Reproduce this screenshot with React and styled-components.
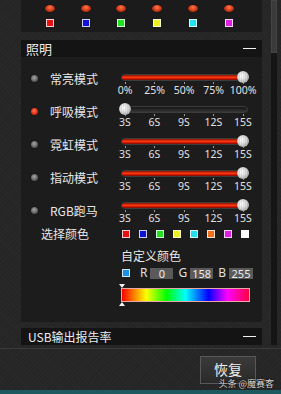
import React from 'react';
import styled, { createGlobalStyle } from 'styled-components';

const Global = createGlobalStyle`
  html, body { margin: 0; padding: 0; background: #252525; }
  body { font-family: "Noto Sans CJK SC", "Noto Sans", sans-serif; }
  * { box-sizing: border-box; }
`;

const Page = styled.div`
  width: 281px;
  height: 394px;
  overflow: hidden;
  display: flex;
  flex-direction: column;
  background-color: #262626;
  background-image:
    repeating-linear-gradient(45deg, rgba(255,255,255,0.018) 0 1px, transparent 1px 3px),
    repeating-linear-gradient(-45deg, rgba(0,0,0,0.05) 0 1px, transparent 1px 4px);
`;

const ScrollArea = styled.div`
  height: 348px;
  display: flex;
  padding-left: 21px;
  flex-shrink: 0;
`;

const Content = styled.div`
  width: 241px;
  display: flex;
  flex-direction: column;
`;

const TopPanel = styled.div`
  height: 32px;
  background: #1b1b1b;
  display: grid;
  grid-template-columns: repeat(6, 35.8px);
  padding: 5px 0 0 11px;
`;

const TopItem = styled.div`
  display: flex;
  flex-direction: column;
  align-items: center;
  gap: 7px;
`;

const Orb = styled.span`
  width: 10px;
  height: 7px;
  border-radius: 50%;
  background: radial-gradient(ellipse at 50% 35%, #ff7a50 0%, #d8401c 45%, #7a1a08 100%);
  box-shadow: 0 0 1px #000;
`;

const Swatch = styled.span`
  width: 8px;
  height: 8px;
  border: 1px solid rgba(255, 255, 255, 0.8);
  background: ${p => p.$c};
  flex-shrink: 0;
`;

const SectionHeader = styled.div`
  height: 17px;
  margin-top: ${p => p.$mt}px;
  background: #141414;
  display: flex;
  align-items: center;
  justify-content: space-between;
  padding: 0 6px 0 ${p => p.$pl}px;
  color: #ececec;
  font-size: ${p => p.$fs}px;
  line-height: 1;
`;

const Dash = styled.span`
  width: 13px;
  height: 1.5px;
  background: #f2f2f2;
`;

const Body = styled.div`
  height: 265px;
  background: #1c1c1c;
  padding: 0 12px 0 10px;
  display: flex;
  flex-direction: column;
`;

const TwoCol = styled.div`
  display: grid;
  grid-template-columns: 90px 129px;
  margin-top: ${p => p.$mt || 0}px;
`;

const ModeList = styled.div`
  padding-top: 5px;
  display: flex;
  flex-direction: column;
`;

const ModeItem = styled.div`
  height: 33px;
  display: flex;
  align-items: center;
`;

const Led = styled.span`
  width: 7px;
  height: 7px;
  border-radius: 50%;
  margin-right: 12px;
  background: ${p => p.$on
    ? 'radial-gradient(circle at 45% 40%, #ff7a55 0%, #e6321a 50%, #8a1406 100%)'
    : 'radial-gradient(circle at 45% 40%, #a8a8a8 0%, #6a6a6a 50%, #333 100%)'};
  box-shadow: 0 0 1px #000;
`;

const ModeText = styled.span`
  color: #e8e8e8;
  font-size: 12px;
  line-height: 14px;
  white-space: nowrap;
`;

const SliderList = styled.div`
  padding-top: 14px;
  display: flex;
  flex-direction: column;
  gap: 6px;
`;

const SliderBlock = styled.div`
  height: 26px;
  width: 127px;
`;

const TrackWrap = styled.div`
  position: relative;
  height: 12px;
  display: flex;
  align-items: center;
`;

const Track = styled.div`
  width: 100%;
  height: 7px;
  border-radius: 4px;
  background: linear-gradient(#151515, #363636);
  border: 1px solid #3c3c3c;
  overflow: hidden;
  display: flex;
`;

const Fill = styled.div`
  height: 100%;
  background: linear-gradient(#8a1000 0%, #ff3a14 45%, #e02008 65%, #7a0a00 100%);
`;

const Thumb = styled.span`
  position: absolute;
  top: 0;
  width: 12px;
  height: 12px;
  border-radius: 50%;
  background:
    repeating-linear-gradient(90deg, rgba(0,0,0,0.06) 0 1px, transparent 1px 2px),
    radial-gradient(circle at 40% 40%, #ffffff 0%, #dcdcdc 40%, #8c8c8c 100%);
  box-shadow: 0 0 1px #000;
`;

const Scale = styled.div`
  display: flex;
  justify-content: space-between;
  padding: 0 5px 0 4px;
  margin-top: -1px;
`;

const ScaleItem = styled.div`
  width: 0;
  display: flex;
  flex-direction: column;
  align-items: center;
`;

const Tick = styled.span`
  width: 1px;
  height: 2px;
  background: #9a9a9a;
`;

const ScaleLabel = styled.span`
  font-family: "Noto Sans", sans-serif;
  font-size: 10.5px;
  line-height: 12px;
  color: #e2e2e2;
  white-space: nowrap;
`;

const ColorLabel = styled.span`
  padding-left: 10px;
  color: #e8e8e8;
  font-size: 12px;
  line-height: 12px;
  white-space: nowrap;
`;

const SwatchRow = styled.div`
  display: flex;
  align-items: center;
  gap: 9px;
  padding-left: 1px;
  height: 12px;
`;

const CustomBlock = styled.div`
  grid-column: 2;
  display: flex;
  flex-direction: column;
`;

const CustomTitle = styled.div`
  margin-top: 9px;
  height: 14px;
  line-height: 14px;
  font-size: 12px;
  color: #e8e8e8;
  white-space: nowrap;
`;

const RgbRow = styled.div`
  margin-top: 4px;
  height: 12px;
  display: flex;
  align-items: center;
  padding-left: 1px;
`;

const Channel = styled.div`
  display: flex;
  align-items: center;
  gap: 3px;
  margin-left: ${p => p.$ml}px;
`;

const ChannelLetter = styled.span`
  font-family: "Noto Sans", sans-serif;
  font-size: 12px;
  line-height: 12px;
  color: #e0e0e0;
`;

const ChannelBox = styled.span`
  width: ${p => p.$w}px;
  height: 11px;
  background: #5a5a5a;
  color: #ececec;
  font-family: "Noto Sans", sans-serif;
  font-size: 11px;
  line-height: 11px;
  text-align: center;
`;

const Picker = styled.div`
  margin-top: 5px;
  display: flex;
  flex-direction: column;
`;

const Marker = styled.span`
  width: 0;
  height: 0;
  margin-left: -2px;
  border-left: 3px solid transparent;
  border-right: 3px solid transparent;
  ${p => p.$down
    ? 'border-top: 4px solid #f4f4f4;'
    : 'border-bottom: 4px solid #f4f4f4;'}
`;

const Spectrum = styled.div`
  width: 129px;
  height: 14px;
  border: 1px solid #e8a8a8;
  background: linear-gradient(90deg,
    #ff0000 0%, #ff7a00 9%, #ffff00 19%, #00ff00 35%, #00ffff 50%,
    #0000ff 68%, #ff00ff 83%, #ff0040 100%);
`;

const ScrollTrack = styled.div`
  margin-left: 9px;
  width: 6px;
  height: 345px;
  background: #151515;
  display: flex;
  flex-direction: column;
`;

const ScrollThumb = styled.div`
  height: 53px;
  background: #3a3a3a;
  border: 1px solid #454545;
`;

const Divider = styled.div`
  height: 1px;
  background: #3a3a3a;
  flex-shrink: 0;
`;

const Footer = styled.div`
  position: relative;
  flex: 1;
  display: flex;
  justify-content: flex-end;
  padding: 7px 25px 0 0;
`;

const Button = styled.button`
  width: 56px;
  height: 28px;
  background: linear-gradient(#3a3a3a, #2a2a2a);
  border: 1px solid #585858;
  color: #f0f0f0;
  font-family: "Noto Sans CJK SC", sans-serif;
  font-size: 14px;
  line-height: 1;
  padding: 0 0 2px;
  cursor: pointer;
`;

const Watermark = styled.span`
  position: absolute;
  right: 7px;
  bottom: 1px;
  font-size: 9px;
  line-height: 10px;
  color: #d6d6d6;
  text-shadow: 0 0 2px #000;
  white-space: nowrap;
`;

const Teal = styled.div`
  height: 4px;
  background: #1d5a5f;
  flex-shrink: 0;
`;

const topColors = ['#e81010', '#1010d8', '#22e022', '#f0f020', '#22e0f0', '#e020e0'];
const pickColors = ['#e81010', '#1010d8', '#22e022', '#f0f020', '#22e0f0', '#f07020', '#e020e0', '#ffffff'];

const modes = [
  { name: '常亮模式', on: false },
  { name: '呼吸模式', on: true },
  { name: '霓虹模式', on: false },
  { name: '指动模式', on: false },
  { name: 'RGB跑马', on: false },
];

const pct = ['0%', '25%', '50%', '75%', '100%'];
const secs = ['3S', '6S', '9S', '12S', '15S'];

const sliders = [
  { value: 1, labels: pct },
  { value: 0, labels: secs },
  { value: 1, labels: secs },
  { value: 1, labels: secs },
  { value: 1, labels: secs },
];

function Slider({ value, labels }) {
  const left = -2 + value * 118;
  return (
    <SliderBlock>
      <TrackWrap>
        <Track>
          <Fill style={{ width: `${value * 100}%` }} />
        </Track>
        <Thumb style={{ left: `${left}px` }} />
      </TrackWrap>
      <Scale>
        {labels.map(l => (
          <ScaleItem key={l}>
            <Tick />
            <ScaleLabel>{l}</ScaleLabel>
          </ScaleItem>
        ))}
      </Scale>
    </SliderBlock>
  );
}

export default function App() {
  return (
    <Page>
      <Global />
      <ScrollArea>
        <Content>
          <TopPanel>
            {topColors.map(c => (
              <TopItem key={c}>
                <Orb />
                <Swatch $c={c} />
              </TopItem>
            ))}
          </TopPanel>

          <SectionHeader $mt={8} $pl={5} $fs={13}>
            <span>照明</span>
            <Dash />
          </SectionHeader>

          <Body>
            <TwoCol>
              <ModeList>
                {modes.map(m => (
                  <ModeItem key={m.name}>
                    <Led $on={m.on} />
                    <ModeText>{m.name}</ModeText>
                  </ModeItem>
                ))}
              </ModeList>
              <SliderList>
                {sliders.map((s, i) => (
                  <Slider key={i} value={s.value} labels={s.labels} />
                ))}
              </SliderList>
            </TwoCol>

            <TwoCol $mt={1}>
              <ColorLabel>选择颜色</ColorLabel>
              <SwatchRow>
                {pickColors.map(c => <Swatch key={c} $c={c} />)}
              </SwatchRow>
              <CustomBlock>
                <CustomTitle>自定义颜色</CustomTitle>
                <RgbRow>
                  <Swatch $c="#1a90e2" />
                  <Channel $ml={10}>
                    <ChannelLetter>R</ChannelLetter>
                    <ChannelBox $w={23}>0</ChannelBox>
                  </Channel>
                  <Channel $ml={5}>
                    <ChannelLetter>G</ChannelLetter>
                    <ChannelBox $w={23}>158</ChannelBox>
                  </Channel>
                  <Channel $ml={5}>
                    <ChannelLetter>B</ChannelLetter>
                    <ChannelBox $w={24}>255</ChannelBox>
                  </Channel>
                </RgbRow>
                <Picker>
                  <Marker $down />
                  <Spectrum />
                  <Marker />
                </Picker>
              </CustomBlock>
            </TwoCol>
          </Body>

          <SectionHeader $mt={6} $pl={7} $fs={12}>
            <span>USB输出报告率</span>
            <Dash />
          </SectionHeader>
        </Content>
        <ScrollTrack>
          <ScrollThumb />
        </ScrollTrack>
      </ScrollArea>
      <Divider />
      <Footer>
        <Button>恢复</Button>
        <Watermark>头条 @魔赛客</Watermark>
      </Footer>
      <Teal />
    </Page>
  );
}
